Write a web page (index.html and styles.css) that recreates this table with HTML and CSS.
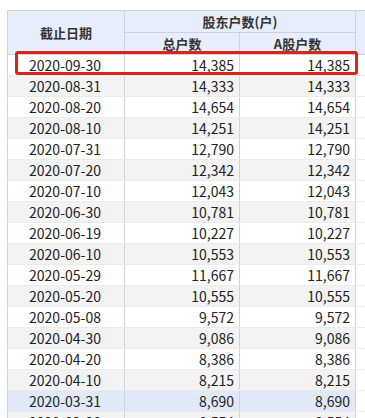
FILE: index.html
```html
<!DOCTYPE html>
<html lang="zh-CN">
<head>
<meta charset="utf-8">
<link rel="stylesheet" href="styles.css">
</head>
<body>
<div class="wrap">
  <table class="grid">
    <colgroup>
      <col class="c1"><col class="c2"><col class="c3"><col class="c4">
    </colgroup>
    <thead>
      <tr class="h1">
        <th rowspan="2">截止日期</th>
        <th colspan="2">股东户数(户)</th>
        <th rowspan="2" class="extra"></th>
      </tr>
      <tr class="h2">
        <th>总户数</th>
        <th>A股户数</th>
      </tr>
    </thead>
    <tbody>
      <tr><td class="d">2020-09-30</td><td class="n">14,385</td><td class="n">14,385</td><td class="extra"></td></tr>
      <tr class="alt"><td class="d">2020-08-31</td><td class="n">14,333</td><td class="n">14,333</td><td class="extra"></td></tr>
      <tr><td class="d">2020-08-20</td><td class="n">14,654</td><td class="n">14,654</td><td class="extra"></td></tr>
      <tr class="alt"><td class="d">2020-08-10</td><td class="n">14,251</td><td class="n">14,251</td><td class="extra"></td></tr>
      <tr><td class="d">2020-07-31</td><td class="n">12,790</td><td class="n">12,790</td><td class="extra"></td></tr>
      <tr class="alt"><td class="d">2020-07-20</td><td class="n">12,342</td><td class="n">12,342</td><td class="extra"></td></tr>
      <tr><td class="d">2020-07-10</td><td class="n">12,043</td><td class="n">12,043</td><td class="extra"></td></tr>
      <tr class="alt"><td class="d">2020-06-30</td><td class="n">10,781</td><td class="n">10,781</td><td class="extra"></td></tr>
      <tr><td class="d">2020-06-19</td><td class="n">10,227</td><td class="n">10,227</td><td class="extra"></td></tr>
      <tr class="alt"><td class="d">2020-06-10</td><td class="n">10,553</td><td class="n">10,553</td><td class="extra"></td></tr>
      <tr><td class="d">2020-05-29</td><td class="n">11,667</td><td class="n">11,667</td><td class="extra"></td></tr>
      <tr class="alt"><td class="d">2020-05-20</td><td class="n">10,555</td><td class="n">10,555</td><td class="extra"></td></tr>
      <tr><td class="d">2020-05-08</td><td class="n">9,572</td><td class="n">9,572</td><td class="extra"></td></tr>
      <tr class="alt"><td class="d">2020-04-30</td><td class="n">9,086</td><td class="n">9,086</td><td class="extra"></td></tr>
      <tr><td class="d">2020-04-20</td><td class="n">8,386</td><td class="n">8,386</td><td class="extra"></td></tr>
      <tr class="alt"><td class="d">2020-04-10</td><td class="n">8,215</td><td class="n">8,215</td><td class="extra"></td></tr>
      <tr class="hover"><td class="d">2020-03-31</td><td class="n">8,690</td><td class="n">8,690</td><td class="extra"></td></tr>
      <tr class="alt"><td class="d">2020-03-20</td><td class="n">8,554</td><td class="n">8,554</td><td class="extra"></td></tr>
    </tbody>
  </table>
  <div class="mark"></div>
</div>
</body>
</html>
```

FILE: styles.css
```css
html, body {
  margin: 0;
  padding: 0;
  background: #ffffff;
  overflow: hidden;
}
body {
  width: 365px;
  height: 418px;
  font-family: "Noto Sans CJK SC", "Noto Sans", sans-serif;
  color: #222222;
}
.wrap {
  position: relative;
  padding: 10px 0 0 7px;
  height: 408px;
  overflow: hidden;
}
.grid {
  border-collapse: collapse;
  table-layout: fixed;
  width: 378px;
}
.c1 { width: 117px; }
.c2 { width: 115px; }
.c3 { width: 116px; }
.c4 { width: 30px; }

.grid th {
  background: #e5eefa;
  color: #333333;
  font-weight: 700;
  font-size: 13px;
  text-align: center;
  padding: 0;
  border: 1px solid #c9d3df;
  line-height: 20px;
}
.grid tr.h1 th { height: 21px; }
.grid tr.h2 th { height: 21px; }
.grid th.extra { border-right: none; }

.grid td {
  height: 20px;
  padding: 0;
  font-size: 14px;
  line-height: 20px;
  border-left: 1px solid #c9d3df;
  border-right: 1px solid #c9d3df;
  border-bottom: 1px solid #ebebeb;
  white-space: nowrap;
}
.grid td.d {
  text-align: center;
  padding-right: 2px;
}
.grid td.n {
  text-align: right;
  padding-right: 5px;
}
.grid td.extra {
  border-right: none;
}
.grid tr.alt td { background: #f3f3f3; }
.grid tr.hover td { background: #dfe9f7; }
.grid tr td.extra { background: #ffffff; }

.mark {
  position: absolute;
  left: 15px;
  top: 51px;
  width: 337px;
  height: 18px;
  border: 3px solid #d8261f;
  border-radius: 3px;
}
```
